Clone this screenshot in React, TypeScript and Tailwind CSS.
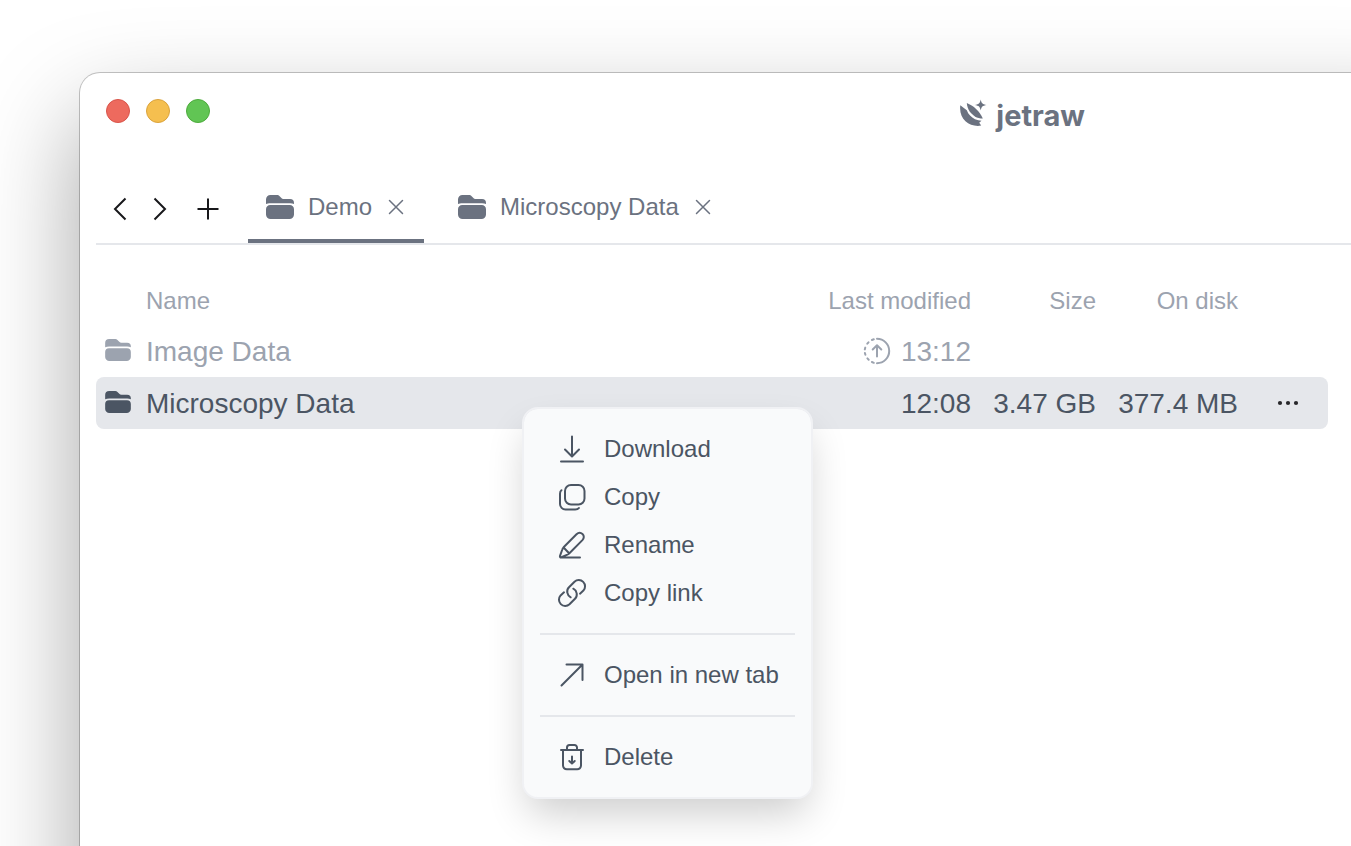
import type { ReactNode } from "react";

type IconProps = { className?: string };

function FolderIcon({ className }: IconProps) {
  return (
    <svg viewBox="0 0 28 24" fill="currentColor" aria-hidden="true" className={className}>
      <path d="M0 9V4.400A4.400 4.400 0 0 1 4.400 0h6.700c1 0 1.600.3 2.300 1l2 2c.7.7 1.300 1 2.300 1H24a4 4 0 0 1 4 4v1c-1.200-.6-2.400-.8-4-.8H4.400C2.600 8.200 1.200 8.400 0 9Z" />
      <path d="M4.200 10h19.600A4.200 4.200 0 0 1 28 14.200v5.300a4.500 4.500 0 0 1-4.500 4.500h-19A4.500 4.500 0 0 1 0 19.500v-5.300A4.200 4.200 0 0 1 4.200 10Z" />
    </svg>
  );
}

function LineIcon({ children, className }: { children: ReactNode; className: string }) {
  return (
    <svg
      viewBox="0 0 32 32"
      fill="none"
      stroke="currentColor"
      strokeWidth="2"
      strokeLinecap="round"
      strokeLinejoin="round"
      aria-hidden="true"
      className={className}
    >
      {children}
    </svg>
  );
}

function LogoMark() {
  return (
    <svg viewBox="0 0 28 28" fill="currentColor" aria-hidden="true" className="h-7 w-7">
      <path d="M20.700.5c.7 3.700 1.800 4.800 5.800 5.500-4 .7-5.100 1.800-5.800 5.500-.7-3.700-1.800-4.800-5.800-5.500 4-.7 5.100-1.800 5.800-5.500Z" />
      <path d="M6.800 4C13.500 6.800 19.500 11.800 22.800 19.400c-2.800 0-5.500-.6-7.900-2C10.800 14.700 7.400 10.800 6.800 4Z" />
      <path d="M.3 6.300 6.800 11.300C8.300 15.500 11.300 18.300 15 20.200c2.200.9 4.500 1.400 6.500 1.500l-2.300 2 2 2.900C10 28.500-1.500 21 .3 6.300Z" />
    </svg>
  );
}

function UploadingIcon() {
  return (
    <LineIcon className="mb-0.5 h-8 w-8">
      <path d="M16 3.800a12.200 12.200 0 0 1 0 24.400" />
      <path
        d="M12.800 4.300l-1.900.7M7.500 7.300l-1.200 1.400M4.300 12.600l-.5 1.800M3.900 18l.5 1.700M6.400 23.400l1.300 1.300M10.900 27l1.900.8"
      />
      <path d="M16 21.500V10.600M11.700 14.500l4.300-4.200 4.300 4.200" />
    </LineIcon>
  );
}

const menuGroups: { label: string; icon: ReactNode }[][] = [
  [
    { label: "Download", icon: <path d="M16 4v19.500M9 17l7 7 7-7M5 29h22" transform="translate(0 -.5)" /> },
    {
      label: "Copy",
      icon: (
        <>
          <rect x="9" y="4" width="19.500" height="19.500" rx="6" />
          <path d="M5.400 9.200C4.300 10 4 11.200 4 12.800V23a5.500 5.500 0 0 0 5.500 5.500h9.700c1.600 0 2.900-.4 3.700-1.500" />
        </>
      ),
    },
    {
      label: "Rename",
      icon: (
        <path d="M24 28.500H5.200c-1 0-1.500-.7-1.200-1.600l2.300-6.400c.3-.9.700-1.500 1.300-2.200L20.500 5.300c1.900-1.900 4.200-2 6-.3 1.800 1.700 1.700 4.200-.1 6.100L13.400 24.200c-.6.600-1.200 1-2 1.400l-6.500 2.800M7.600 18.500l5.500 5.700" />
      ),
    },
    {
      label: "Copy link",
      icon: (
        <>
          <path d="M17.300 11.700c3.800 2 4.700 7 1.700 10l-5.500 5.600a6.300 6.300 0 0 1-8.900-8.900L8 15.300" />
          <path d="M14.700 20.300c-3.800-2-4.700-7-1.700-10l5.500-5.600a6.300 6.300 0 0 1 8.900 8.900L24 16.700" />
        </>
      ),
    },
  ],
  [{ label: "Open in new tab", icon: <path d="M5.500 26.500 26.500 5.500M10.500 5.500h16v15.500" /> }],
  [
    {
      label: "Delete",
      icon: (
        <>
          <path d="M5 9h22M11 9V6.500A2.500 2.500 0 0 1 13.500 4h5A2.500 2.500 0 0 1 21 6.500V9M7 9v15.500A3.800 3.800 0 0 0 10.800 28.300h10.400A3.800 3.800 0 0 0 25 24.500V9" />
          <path d="M16 15.500v7M13.300 20l2.700 2.600 2.700-2.600" />
        </>
      ),
    },
  ],
];

function ContextMenu() {
  return (
    <div
      role="menu"
      aria-label="Folder actions"
      className="absolute top-[130px] left-[426px] flex flex-col rounded-2xl border-2 border-[#f0f1f4] bg-[#f9fafb] bg-clip-padding p-4 text-[#4b5563] shadow-[0_20px_40px_-6px_rgba(0,0,0,0.2)]"
    >
      {menuGroups.map((group, index) => (
        <div key={group[0].label} role="group" className="flex flex-col">
          {index > 0 && <hr className="my-4 border-t-2 border-[#e5e7eb]" />}
          {group.map((item) => (
            <button key={item.label} type="button" role="menuitem" className="flex h-12 items-center gap-4 px-4 text-2xl whitespace-nowrap">
              <LineIcon className="h-8 w-8">{item.icon}</LineIcon>
              {item.label}
            </button>
          ))}
        </div>
      ))}
    </div>
  );
}

function Tab({ label, active = false }: { label: string; active?: boolean }) {
  return (
    <div className={`flex items-center border-b-4 pr-4 pl-[18px] ${active ? "border-[#6b7280]" : "border-transparent"}`}>
      <button type="button" role="tab" aria-selected={active} className="flex items-center gap-3.5 text-2xl whitespace-nowrap">
        <FolderIcon className="h-6 w-7" />
        {label}
      </button>
      <button type="button" aria-label={`Close ${label}`} className="ml-3 flex h-6 w-6 items-center justify-center">
        <svg viewBox="0 0 24 24" fill="none" stroke="currentColor" strokeWidth="1.500" strokeLinecap="round" aria-hidden="true" className="h-6 w-6">
          <path d="m5.500 5.500 13 13m0-13-13 13" />
        </svg>
      </button>
    </div>
  );
}

function NavButton({ label, path, className = "" }: { label: string; path: string; className?: string }) {
  return (
    <button type="button" aria-label={label} className={`flex h-10 w-10 items-center justify-center self-center text-[#18181b] ${className}`}>
      <svg viewBox="0 0 24 24" fill="none" stroke="currentColor" strokeWidth="2" strokeLinejoin="miter" aria-hidden="true" className="h-6 w-6">
        <path d={path} />
      </svg>
    </button>
  );
}

function FileTable() {
  return (
    <table className="w-full table-fixed border-separate border-spacing-0 text-[28px] leading-8 whitespace-nowrap">
      <colgroup>
        <col />
        <col className="w-[164px]" />
        <col className="w-[125px]" />
        <col className="w-[142px]" />
        <col className="w-[90px]" />
      </colgroup>
      <thead>
        <tr className="h-12 text-2xl text-[#9ca3af]">
          <th scope="col" className="p-0 pl-[50px] text-left font-normal">Name</th>
          <th scope="col" className="p-0 text-right font-normal">Last modified</th>
          <th scope="col" className="p-0 text-right font-normal">Size</th>
          <th scope="col" className="p-0 text-right font-normal">On disk</th>
          <td className="p-0" />
        </tr>
      </thead>
      <tbody>
        <tr className="h-13 text-[#9ca3af]">
          <td className="p-0 pt-0.5 pl-[9px]">
            <div className="flex items-center gap-[15px]">
              <FolderIcon className="mb-1 h-[22px] w-[26px]" />
              Image Data
            </div>
          </td>
          <td className="p-0 pt-0.5">
            <div className="flex items-center justify-end gap-2">
              <UploadingIcon />
              13:12
            </div>
          </td>
          <td className="p-0" />
          <td className="p-0" />
          <td className="p-0" />
        </tr>
        <tr className="h-13 text-[#4b5563]">
          <td className="rounded-l-lg bg-[#e5e7eb] p-0 pt-0.5 pl-[9px]">
            <div className="flex items-center gap-[15px]">
              <FolderIcon className="mb-1 h-[22px] w-[26px]" />
              Microscopy Data
            </div>
          </td>
          <td className="bg-[#e5e7eb] p-0 pt-0.5 text-right">12:08</td>
          <td className="bg-[#e5e7eb] p-0 pt-0.5 text-right">3.47 GB</td>
          <td className="bg-[#e5e7eb] p-0 pt-0.5 text-right">377.4 MB</td>
          <td className="rounded-r-lg bg-[#e5e7eb] p-0 pl-2.5">
            <button type="button" aria-label="More actions" className="mx-auto flex h-8 w-8 items-center justify-center text-[#27272a]">
              <svg viewBox="0 0 32 32" fill="currentColor" aria-hidden="true" className="h-8 w-8">
                <circle cx="8" cy="16" r="2.100" />
                <circle cx="16" cy="16" r="2.100" />
                <circle cx="24" cy="16" r="2.100" />
              </svg>
            </button>
          </td>
        </tr>
      </tbody>
    </table>
  );
}

export default function App() {
  return (
    <div className="flex min-h-screen flex-col overflow-hidden bg-white pt-[73px] pl-20 font-['Liberation_Sans',Arial,sans-serif]">
      <div className="-mr-24 -mb-24 flex grow flex-col rounded-tl-[20px] bg-white pr-24 pb-24 shadow-[0_0_0_1px_rgba(0,0,0,0.22),0_44px_100px_rgba(0,0,0,0.36)]">
        <header className="flex h-[102px] items-start justify-between pt-[26px] pr-[266px] pl-[26px]">
          <div className="flex gap-4">
            <button type="button" aria-label="Close window" className="h-6 w-6 rounded-full border border-[#d9544a] bg-[#ed6a5e]" />
            <button type="button" aria-label="Minimize window" className="h-6 w-6 rounded-full border border-[#dba33c] bg-[#f5bf4f]" />
            <button type="button" aria-label="Zoom window" className="h-6 w-6 rounded-full border border-[#4dab3c] bg-[#61c554]" />
          </div>
          <div className="flex gap-2 text-[#6b7280]">
            <LogoMark />
            <span className="font-[Inter,sans-serif] text-[29px] leading-[34px] font-bold">jetraw</span>
          </div>
        </header>

        <nav aria-label="Tabs" className="ml-4 flex h-[70px] border-b-2 border-[#e5e7eb] pl-1 text-[#6b7280]">
          <NavButton label="Back" path="M17.500 1.500 7 12l10.500 10.500" />
          <NavButton label="Forward" path="M6.500 1.500 17 12 6.500 22.500" />
          <NavButton label="New tab" path="M12 1.500v21M1.500 12h21" className="ml-2" />
          <div role="tablist" className="ml-5 flex gap-4">
            <Tab label="Demo" active />
            <Tab label="Microscopy Data" />
          </div>
        </nav>

        <main className="relative mt-8 mr-[23px] ml-4">
          <FileTable />
          <ContextMenu />
        </main>
      </div>
    </div>
  );
}
